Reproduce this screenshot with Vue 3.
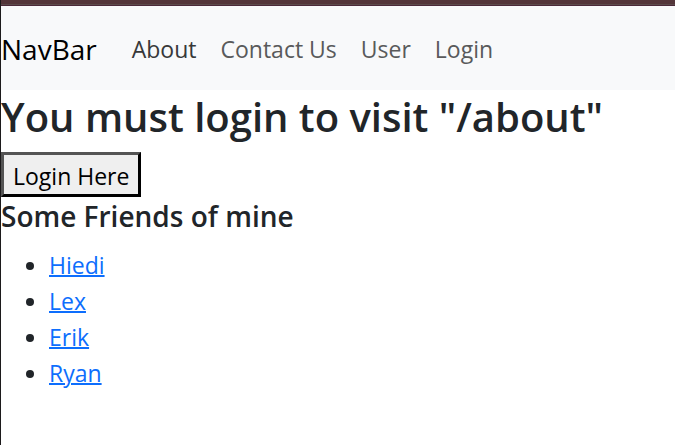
<script setup>
const links = [
  { label: 'About', active: true },
  { label: 'Contact Us' },
  { label: 'User' },
  { label: 'Login' },
]
const friends = ['Hiedi', 'Lex', 'Erik', 'Ryan']
</script>

<template>
  <div class="page">
    <nav class="navbar">
      <a class="brand" href="#">NavBar</a>
      <a
        v-for="link in links"
        :key="link.label"
        class="nav-link"
        :class="{ active: link.active }"
        href="#"
      >{{ link.label }}</a>
    </nav>
    <main>
      <h1>You must login to visit "/about"</h1>
      <button type="button">Login Here</button>
      <h2>Some Friends of mine</h2>
      <ul>
        <li v-for="friend in friends" :key="friend"><a href="#">{{ friend }}</a></li>
      </ul>
    </main>
  </div>
</template>

<style>
body {
  margin: 0;
  background: #fff;
}
</style>

<style scoped>
.page {
  box-sizing: border-box;
  min-height: 100vh;
  border-left: 1px solid #1c1a1b;
  color: #212529;
  font-family: "Open Sans", "Noto Sans", sans-serif;
  font-size: 23px;
  line-height: 36px;
}
.page::before {
  display: block;
  height: 6px;
  background: linear-gradient(#533539 4px, #5b4a4a 4px 5px, #4b2838 5px);
  content: "";
}
.navbar {
  display: flex;
  align-items: center;
  padding: 25px 0 23px;
  background: #f8f9fa;
}
.brand {
  margin-right: 23px;
  color: #000;
  font-size: 28px;
  text-decoration: none;
}
.nav-link {
  padding: 0 12px;
  color: #595a5b;
  text-decoration: none;
}
.nav-link.active {
  color: #373839;
}
h1 {
  margin: 0 0 8px;
  font-size: 40px;
  font-weight: 600;
  line-height: 54px;
}
button {
  display: block;
  padding: 3px 9px 0;
  border: 3px outset #000;
  background: #efefef;
  color: #000;
  font: inherit;
}
h2 {
  margin: 0 0 13px;
  padding-top: 1px;
  font-size: 28px;
  font-weight: 600;
}
ul {
  margin: 0;
  padding-left: 48px;
}
li a {
  color: #0d6efd;
  text-decoration-thickness: 2px;
}
</style>
